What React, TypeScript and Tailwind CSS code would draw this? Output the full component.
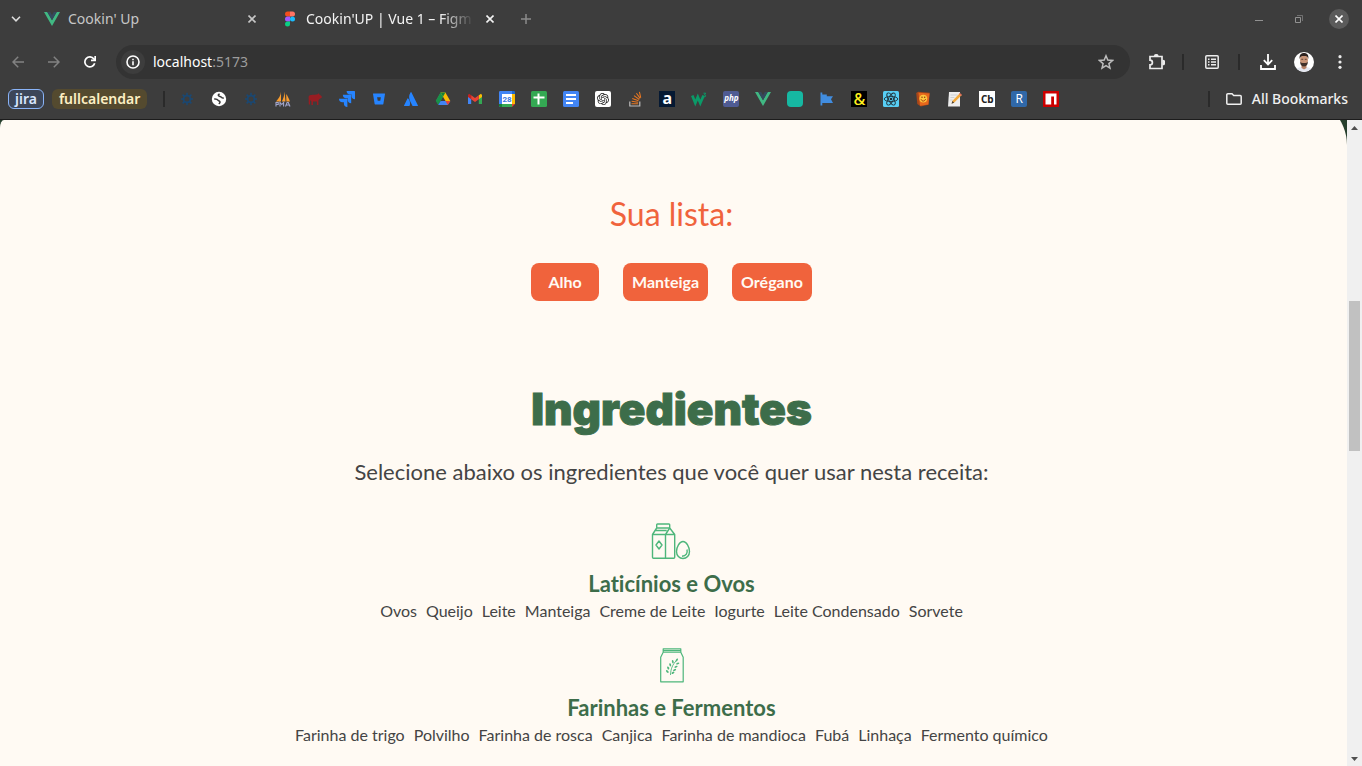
import React from 'react';
import { SiOpenai, SiJira, SiBitbucket, SiAtlassian } from 'react-icons/si';

type IconProps = { className?: string };

const VueIcon = ({ className = 'size-4' }: IconProps) => (
  <svg viewBox="0 0 16 16" className={className}>
    <path d="M0 1h3.3L8 9.2 12.7 1H16L8 15z" fill="#41b883" />
    <path d="M3.3 1h2.9L8 4.2 9.8 1h2.9L8 9.2z" fill="#34495e" />
  </svg>
);

const FigmaIcon = () => (
  <svg viewBox="0 0 16 16" className="size-4">
    <path d="M5.500.5H8v5H5.500a2.500 2.500 0 0 1 0-5z" fill="#f24e1e" />
    <path d="M8 .5h2.500a2.500 2.500 0 0 1 0 5H8z" fill="#ff7262" />
    <path d="M5.500 5.500H8v5H5.500a2.500 2.500 0 0 1 0-5z" fill="#a259ff" />
    <circle cx="10.500" cy="8" r="2.500" fill="#1abcfe" />
    <path d="M5.500 10.500H8V13a2.500 2.500 0 1 1-2.500-2.500z" fill="#0acf83" />
  </svg>
);

const CloseIcon = ({ className = 'size-2' }: IconProps) => (
  <svg viewBox="0 0 8 8" className={className} fill="none" stroke="currentColor" strokeWidth="1.6">
    <path d="M.5.5l7 7M7.500.5l-7 7" />
  </svg>
);

const BurstIcon = () => (
  <svg viewBox="0 0 16 16" className="size-4" fill="none" stroke="#1b4872">
    <circle cx="8" cy="8" r="3.400" strokeWidth="1.800" />
    <path d="M8 1.800v3M8 11.200v3M2 8h3M11 8h3M3.600 3.600l2 2M10.400 10.400l2 2M12.400 3.600l-2 2M5.600 10.400l-2 2" strokeWidth="1.500" />
  </svg>
);

const GlobeIcon = () => (
  <svg viewBox="0 0 16 16" className="size-4">
    <circle cx="8" cy="8" r="7.200" fill="#fff" />
    <path d="M3.200 8c2-.2 3.200.2 3.900 1.200.8 1 2 .7 1.900 1.900-.1.900-.8 1.200-.9 2.100M8.600 2.800c-1 .6-1.800 1.200-1 2 .8.800 2.100.5 2.800 1.400.6.900 1.600 1 2.400.8" fill="none" stroke="#3c3c3c" strokeWidth="1.500" />
  </svg>
);

const SailIcon = () => (
  <svg viewBox="0 0 16 16" className="size-4">
    <path d="M6 .8C5.800 4 4 7.500 1 10.500h5zM9.500.5c-.2 4-1 7-2.700 10h3.700zM11.200 3c1.500 2 2.600 4.500 3.800 7.500h-3.600z" fill="#f89c2e" />
    <path d="M1 15.500v-4h2.200v2H1M5 15.500v-4l1.800 2 1.800-2v4M10.500 15.500l1.600-4h1.200l1.700 4M11 14h3.200" fill="none" stroke="#a3a6cc" strokeWidth="1.100" />
  </svg>
);

const PigIcon = () => (
  <svg viewBox="0 0 16 16" className="size-4">
    <path d="M1.600 5.600C3 3.400 5.500 4 8 3.800l2.600-.5 1-1 .8 1.300 2.300 1.600v1.500l-1.800 1-1.500 1.600V14h-1.500v-3.600H6V14H4.400v-3.500L3 9v4.500H1.800z" fill="#981d22" />
  </svg>
);

const DriveIcon = () => (
  <svg viewBox="0 0 16 16" className="size-4">
    <path d="M5.600 1.500h4.800L5.500 10H.8z" fill="#34a853" />
    <path d="M5.600 1.500L8 5.700 3.200 14 .8 10z" fill="#18904a" />
    <path d="M10.400 1.500L15.300 10h-4.800L5.600 1.500z" fill="#fbbc04" />
    <path d="M5.600 1.500h4.800L8 5.700z" fill="#188038" />
    <path d="M5.600 10h9.700l-2.500 4H3.200z" fill="#4285f4" />
    <path d="M10.500 10h4.800l-2.500 4z" fill="#ea4335" />
  </svg>
);

const GmailIcon = () => (
  <svg viewBox="0 0 16 16" className="size-4">
    <path d="M1 4v9h3.200V7z" fill="#4285f4" />
    <path d="M15 4v9h-3.200V7z" fill="#34a853" />
    <path d="M11.800 4.200L14 2.700l1 1.300v2l-3.200 2.300z" fill="#fbbc04" />
    <path d="M4.200 4.200L2 2.700 1 4v2l3.200 2.300z" fill="#c5221f" />
    <path d="M4.200 4.200L8 7l3.800-2.800v4.100L8 11.100 4.200 8.300z" fill="#ea4335" />
  </svg>
);

const CalendarIcon = () => (
  <svg viewBox="0 0 16 16" className="size-4">
    <path d="M0 1.200A1.200 1.200 0 0 1 1.200 0H13v3H3v13H1.200A1.200 1.200 0 0 1 0 14.800z" fill="#4285f4" />
    <path d="M13 0h1.800A1.200 1.200 0 0 1 16 1.200V3h-3z" fill="#1967d2" />
    <path d="M13 3h3v10h-3z" fill="#fbbc04" />
    <path d="M3 13h10v3H3z" fill="#34a853" />
    <path d="M0 13h3v3H1.200A1.200 1.200 0 0 1 0 14.800z" fill="#188038" />
    <path d="M13 13h3l-3 3z" fill="#ea4335" />
    <path d="M3 3h10v10H3z" fill="#fff" />
    <text x="8" y="11" textAnchor="middle" fontSize="8" fontWeight="700" fill="#3b78e0" fontFamily="Roboto, sans-serif">28</text>
  </svg>
);

const SheetsIcon = () => (
  <svg viewBox="0 0 16 16" className="size-4">
    <rect width="16" height="16" rx="1.500" fill="#34a853" />
    <path d="M2.500 6.500h11M7.500 2.500v11" stroke="#fff" strokeWidth="2" />
  </svg>
);

const DocsIcon = () => (
  <svg viewBox="0 0 16 16" className="size-4">
    <rect width="16" height="16" rx="1.500" fill="#4285f4" />
    <path d="M3 4h10M3 8h10M3 12h7" stroke="#fff" strokeWidth="2" />
  </svg>
);

const OpenAiTile = () => (
  <span className="flex size-4 items-center justify-center rounded-xs bg-white text-[#222]">
    <SiOpenai className="size-3" />
  </span>
);

const StackIcon = () => (
  <svg viewBox="0 0 16 16" className="size-4" fill="none">
    <path d="M2.800 10.500v4.500h10v-4.500" stroke="#bcbbbb" strokeWidth="1.200" />
    <path d="M4.500 12.800h6.600M4.600 10.300l6.500 1M5.300 7.500l6.200 2.300M7 4.600l5.300 3.900M9.400 2.200l3.800 5.200M12.400.8l1.300 5.800" stroke="#e87722" strokeWidth="1.100" />
  </svg>
);

const W3Icon = () => (
  <svg viewBox="0 0 16 16" className="size-4" fill="none" stroke="#0b9a68">
    <path d="M1.300 4.500l3 7.500 2.500-6 2.500 6 3.300-7.500" strokeWidth="2.700" />
    <path d="M12.500 2.200h2.200L13.500 3.900c1.900.1 1.600 2.400-.6 1.800" strokeWidth="1" />
  </svg>
);

const FlagIcon = () => (
  <svg viewBox="0 0 16 16" className="size-4" fill="#418de0">
    <path d="M1.500 1.500h1.800v13H1.500zM3.300 3.500h4.500v1.800h6.200l-2 3 2 3.700H3.300z" />
  </svg>
);

const ReactTile = () => (
  <svg viewBox="0 0 16 16" className="size-4">
    <rect width="16" height="16" rx="1.500" fill="#58cff5" />
    <g fill="none" stroke="#20333c" strokeWidth=".9">
      <ellipse cx="8" cy="8" rx="6.800" ry="2.600" />
      <ellipse cx="8" cy="8" rx="6.800" ry="2.600" transform="rotate(60 8 8)" />
      <ellipse cx="8" cy="8" rx="6.800" ry="2.600" transform="rotate(120 8 8)" />
    </g>
    <circle cx="8" cy="8" r="1.300" fill="#20333c" />
  </svg>
);

const SmileBookIcon = () => (
  <svg viewBox="0 0 16 16" className="size-4">
    <path d="M1.200 2l2-1.300 11.600 1-1.200 12-7.800 1.800-3.500-2.600z" fill="#a94719" />
    <path d="M3.500 1.800l11 .6-1.200 11-8.300 1.400z" fill="#e6671d" />
    <circle cx="8.300" cy="7.600" r="3.900" fill="#ffc53d" />
    <path d="M6 8.200c1 2.600 3.800 2.400 4.600-.2" fill="none" stroke="#a03c10" />
    <circle cx="7" cy="6.300" r=".7" fill="#803010" />
    <circle cx="9.700" cy="6.200" r=".7" fill="#803010" />
  </svg>
);

const NoteIcon = () => (
  <svg viewBox="0 0 16 16" className="size-4">
    <path d="M2 1h11v14.500H1z" fill="#ededed" />
    <path d="M3.500 4h7M3.400 6.500h4M3.200 9h2.500" stroke="#c5c8cc" strokeWidth=".8" />
    <path d="M5.500 9.800l7.300-7.600 2 1.800-7.500 7.600-2.600 1z" fill="#f3a93a" />
    <path d="M12 3l.9-1 2 1.900-.9 1z" fill="#de6a62" />
    <path d="M4.500 12.800l.9-2.800 1.800 1.700z" fill="#4a4033" />
  </svg>
);

const NpmIcon = () => (
  <svg viewBox="0 0 16 16" className="size-4">
    <path d="M0 0h16v16H0z" fill="#cb0000" />
    <path d="M2.500 2.500h11v11H11V5.500H8.200v8H2.500z" fill="#fff" />
  </svg>
);

const bookmarks: { name: string; icon: React.ReactNode }[] = [
  { name: 'Burst', icon: <BurstIcon /> },
  { name: 'Globe', icon: <GlobeIcon /> },
  { name: 'Burst docs', icon: <BurstIcon /> },
  { name: 'phpMyAdmin', icon: <SailIcon /> },
  { name: 'Pig', icon: <PigIcon /> },
  { name: 'Jira', icon: <SiJira className="size-4 text-[#2684ff]" /> },
  { name: 'Bitbucket', icon: <SiBitbucket className="size-3 text-[#2684ff]" /> },
  { name: 'Atlassian', icon: <SiAtlassian className="size-3.5 text-[#2684ff]" /> },
  { name: 'Drive', icon: <DriveIcon /> },
  { name: 'Gmail', icon: <GmailIcon /> },
  { name: 'Calendar', icon: <CalendarIcon /> },
  { name: 'Sheets', icon: <SheetsIcon /> },
  { name: 'Docs', icon: <DocsIcon /> },
  { name: 'ChatGPT', icon: <OpenAiTile /> },
  { name: 'Stack Overflow', icon: <StackIcon /> },
  {
    name: 'Alura',
    icon: <span className="flex size-4 items-center justify-center bg-[#051933] pb-0.5 text-base leading-4 font-bold text-white">a</span>,
  },
  { name: 'W3Schools', icon: <W3Icon /> },
  {
    name: 'PHP',
    icon: <span className="flex size-4 items-center justify-center rounded-xs bg-[#4f5b93] pb-0.5 text-[8px] leading-4 font-bold text-white italic">php</span>,
  },
  { name: 'Vue', icon: <VueIcon /> },
  { name: 'Teal', icon: <span className="block size-4 rounded-sm bg-[#16b8a2]" /> },
  { name: 'Flag', icon: <FlagIcon /> },
  {
    name: 'Ampersand',
    icon: <span className="flex size-4 items-center justify-center bg-black text-base leading-4 font-medium text-[#fff01f]">&amp;</span>,
  },
  { name: 'React', icon: <ReactTile /> },
  { name: 'Smile book', icon: <SmileBookIcon /> },
  { name: 'Notes', icon: <NoteIcon /> },
  {
    name: 'Codebeautify',
    icon: <span className="flex size-4 items-center justify-center bg-white text-[10px] leading-4 font-bold text-[#222]">Cb</span>,
  },
  {
    name: 'R',
    icon: <span className="flex size-4 items-center justify-center rounded-xs bg-[#3068a8] text-xs leading-4 text-white">R</span>,
  },
  { name: 'npm', icon: <NpmIcon /> },
];

const TabStrip = () => (
  <div className="flex h-[38px] items-center">
    <button aria-label="Search tabs" className="flex w-8 justify-center text-[#dcdcdc]">
      <svg viewBox="0 0 10 6" className="h-1.5 w-2.5" fill="none" stroke="currentColor" strokeWidth="1.600">
        <path d="M1 .8l4 4 4-4" />
      </svg>
    </button>
    <div className="flex w-[238px] items-center gap-2 pr-2.5 pl-3 text-[#c7c7c7]">
      <VueIcon />
      <span className="grow text-sm">Cookin' Up</span>
      <button aria-label="Close tab" className="flex w-4 justify-center">
        <CloseIcon />
      </button>
    </div>
    <div className="flex w-[238px] items-center gap-2 pr-2.5 pl-3 text-[#f3f3f3]">
      <FigmaIcon />
      <span className="min-w-0 grow mask-r-from-80% text-sm whitespace-nowrap">Cookin'UP | Vue 1 – Figm</span>
      <button aria-label="Close tab" className="flex w-4 shrink-0 justify-center">
        <CloseIcon />
      </button>
    </div>
    <button aria-label="New tab" className="flex w-9 justify-center text-[#8b8b8b]">
      <svg viewBox="0 0 10 10" className="size-2.5" stroke="currentColor" strokeWidth="1.500">
        <path d="M5 0v10M0 5h10" />
      </svg>
    </button>
    <div className="ml-auto flex items-center pr-[3px] text-[#929292]">
      <button aria-label="Minimize" className="flex w-10 justify-center pt-1">
        <svg viewBox="0 0 8 2" className="h-0.5 w-2" fill="currentColor">
          <path d="M0 0h8v1H0z" />
        </svg>
      </button>
      <button aria-label="Restore" className="flex w-10 justify-center">
        <svg viewBox="0 0 8 8" className="size-2" fill="none" stroke="currentColor">
          <path d="M.5 2.500h5v5h-5z" />
          <path d="M2 .5h5.500V6" opacity=".6" />
        </svg>
      </button>
      <button aria-label="Close window" className="flex w-10 justify-center text-white">
        <span className="flex size-5 items-center justify-center rounded-full bg-[#5b5b5b]">
          <CloseIcon />
        </span>
      </button>
    </div>
  </div>
);

const Toolbar = () => (
  <div className="mt-[7px] flex h-[34px] items-center pr-1">
    <button aria-label="Back" className="flex w-9 justify-center text-[#828282]">
      <svg viewBox="0 0 12 12" className="size-3" fill="none" stroke="currentColor" strokeWidth="1.500">
        <path d="M12 6H1M6.200.8L1 6l5.200 5.200" />
      </svg>
    </button>
    <button aria-label="Forward" className="flex w-9 justify-center text-[#828282]">
      <svg viewBox="0 0 12 12" className="size-3" fill="none" stroke="currentColor" strokeWidth="1.500">
        <path d="M0 6h11M5.800.8L11 6l-5.200 5.200" />
      </svg>
    </button>
    <button aria-label="Reload" className="flex w-9 justify-center text-white">
      <svg viewBox="0 0 12 12" className="size-3" fill="none" stroke="currentColor" strokeWidth="1.700">
        <path d="M10.700 7.300A5 5 0 1 1 9.900 2.900L11 4" />
        <path d="M11.200 0v4.300H7" />
      </svg>
    </button>
    <div className="ml-2 flex h-full min-w-0 grow items-center rounded-full bg-[#333] pl-[5px]">
      <button aria-label="Site information" className="flex size-6 items-center justify-center rounded-full bg-[#3d3d3d] text-white">
        <svg viewBox="0 0 14 14" className="size-3.5" fill="none" stroke="currentColor" strokeWidth="1.600">
          <circle cx="7" cy="7" r="6" />
          <path d="M7 6.300v4M7 3.700v1.500" />
        </svg>
      </button>
      <div className="ml-2 text-sm text-[#9d9d9d]">
        <span className="text-white">localhost</span>:5173
      </div>
      <button aria-label="Bookmark this page" className="ml-auto flex w-12 justify-center text-[#bdbdbd]">
        <svg viewBox="0 0 16 16" className="size-4" fill="none" stroke="currentColor" strokeWidth="1.500">
          <path d="M8 1.800l1.800 4.300 4.700.4-3.600 3.100 1.100 4.500L8 11.700l-4 2.400 1.100-4.500-3.600-3.100 4.700-.4z" />
        </svg>
      </button>
    </div>
    <button aria-label="Extensions" className="flex w-[52px] justify-center pl-0.5 text-[#ededed]">
      <svg viewBox="0 0 16 16" className="size-4" fill="none" stroke="currentColor" strokeWidth="1.700">
        <path d="M1 2.500h12v12H1v-3.600a2.400 2.400 0 0 0 0-4.800z" />
        <path d="M5.500 2a2 2 0 0 1 3.500 0M13.500 6.500a2 2 0 0 1 0 4" fill="currentColor" />
      </svg>
    </button>
    <span className="h-4 w-0.5 bg-[#2a2a2a]" />
    <button aria-label="Reading list" className="flex w-[54px] justify-center pl-0.5 text-[#ededed]">
      <svg viewBox="0 0 14 14" className="size-3.5" fill="none" stroke="currentColor" strokeWidth="1.500">
        <rect x=".8" y=".8" width="12.400" height="12.400" rx="1" />
        <path d="M3 4.200h1.500M6 4.200h5M3 7h1.500M6 7h5M3 9.800h1.500M6 9.800h5" />
      </svg>
    </button>
    <span className="h-4 w-0.5 bg-[#2a2a2a]" />
    <button aria-label="Downloads" className="ml-2.5 flex w-9 justify-center text-white">
      <svg viewBox="0 0 16 16" className="size-4" fill="none" stroke="currentColor" strokeWidth="1.800">
        <path d="M8 0v10M3.800 6.200L8 10.400l4.200-4.200M1 11v4h14v-4" />
      </svg>
    </button>
    <button aria-label="Profile" className="flex w-9 justify-center">
      <svg viewBox="0 0 20 20" className="size-5 rounded-full">
        <path d="M0 0h20v20H0z" fill="#fff" />
        <path d="M1 20c1-4 4-5 9-5s8 1 9 5z" fill="#e4e7f0" />
        <path d="M7.500 11h5v5L10 17.500 7.500 16z" fill="#b98468" />
        <ellipse cx="10" cy="8" rx="4" ry="5.500" fill="#c99578" />
        <path d="M5.700 7C5 3 7 1 10 1s5 2 4.300 6c-.6-2.500-1.500-3-4.300-3S6.300 4.500 5.700 7z" fill="#2d2320" />
        <path d="M6 9.500c.3 3.700 1.800 4.900 4 4.900s3.700-1.200 4-4.900c-.8 1.500-2 1.600-4 1.600s-3.200-.1-4-1.600z" fill="#40302a" />
        <path d="M7.300 7.300h1.900M10.800 7.300h1.900" stroke="#40302a" strokeWidth=".8" />
      </svg>
    </button>
    <button aria-label="Menu" className="flex w-9 justify-center text-[#ededed]">
      <svg viewBox="0 0 4 14" className="h-3.5 w-1" fill="currentColor">
        <circle cx="2" cy="1.700" r="1.600" />
        <circle cx="2" cy="7" r="1.600" />
        <circle cx="2" cy="12.300" r="1.600" />
      </svg>
    </button>
  </div>
);

const BookmarksBar = () => (
  <nav aria-label="Bookmarks" className="flex h-10 items-center pr-3.5 pl-2 text-sm">
    <button className="h-5 rounded-md border border-[#8ab4f8] bg-[#3c4659] px-1.5 leading-4 font-semibold text-[#d8e6ff]">jira</button>
    <button className="ml-2 h-5 rounded-md bg-[#544a2f] px-[7px] leading-5 font-semibold text-[#fdf0c4]">fullcalendar</button>
    <span className="ml-4 h-4 w-0.5 bg-[#2a2a2a]" />
    <div className="ml-3.5 flex gap-4">
      {bookmarks.map((b) => (
        <a key={b.name} href="#" aria-label={b.name} className="flex size-4 items-center justify-center">
          {b.icon}
        </a>
      ))}
    </div>
    <span className="ml-auto h-4 w-0.5 bg-[#2a2a2a]" />
    <button className="ml-4 flex items-center gap-2.5 font-medium text-[#f0f0f0]">
      <svg viewBox="0 0 16 12" className="h-3 w-4" fill="none" stroke="currentColor" strokeWidth="1.500">
        <path d="M.8 10.200V1.800a1 1 0 0 1 1-1H6l1.700 1.700h6.500a1 1 0 0 1 1 1v6.700a1 1 0 0 1-1 1H1.800a1 1 0 0 1-1-1z" />
      </svg>
      All Bookmarks
    </button>
  </nav>
);

const MilkEggIcon = () => (
  <svg viewBox="0 0 40 40" className="size-10" fill="none" stroke="#4eb67b" strokeWidth="1.400" strokeLinejoin="round">
    <rect x="5.700" y="3" width="13" height="4" rx=".8" />
    <path d="M5.700 7L1.500 13.500v22.800a1 1 0 0 0 1 1h20.200a1 1 0 0 0 1-1V13.500L18.700 7M1.500 13.500h22.200M14.500 37.300V13.500L18.700 7M4.500 9.500h11.200" />
    <path d="M8 20l3 4-3 4-3-4z" />
    <path d="M32 20.500c3.500 0 6.500 5.500 6.500 10 0 4-2.800 7-6.500 7s-6.500-3-6.500-7c0-4.500 3-10 6.500-10z" />
    <path d="M36 28.500c.8 3.500-.8 6.500-5 6.800" />
  </svg>
);

const FlourIcon = () => (
  <svg viewBox="-1 -1 40 40" className="size-10" fill="none" stroke="#4eb67b" strokeWidth="1.200" strokeLinejoin="round">
    <path d="M11.200 2.800h17.600v3.400H11.200zM11.200 6.200l-2.500 5v24.600h22.500V11.200l-2.400-5M11 4.500h18" />
    <path d="M18.500 29c.2-6 2-10.500 6-14.500" strokeWidth=".9" />
    <g fill="#4eb67b" stroke="none">
      <ellipse cx="24.800" cy="14" rx=".9" ry="1.700" transform="rotate(35 24.800 14)" />
      <ellipse cx="20.800" cy="15.700" rx=".9" ry="1.700" transform="rotate(-10 20.800 15.700)" />
      <ellipse cx="18.200" cy="18.800" rx=".9" ry="1.700" transform="rotate(-15 18.200 18.800)" />
      <ellipse cx="16.200" cy="22" rx=".9" ry="1.700" transform="rotate(-25 16.200 22)" />
      <ellipse cx="15.300" cy="25.500" rx=".9" ry="1.700" transform="rotate(-45 15.300 25.500)" />
      <ellipse cx="25.700" cy="17.500" rx=".9" ry="1.700" transform="rotate(70 25.700 17.500)" />
      <ellipse cx="24" cy="20.800" rx=".9" ry="1.700" transform="rotate(65 24 20.800)" />
      <ellipse cx="22.600" cy="24" rx=".9" ry="1.700" transform="rotate(60 22.600 24)" />
      <ellipse cx="21" cy="26.800" rx=".9" ry="1.600" transform="rotate(55 21 26.800)" />
    </g>
  </svg>
);

const selected = ['Alho', 'Manteiga', 'Orégano'];

const categories = [
  {
    name: 'Laticínios e Ovos',
    icon: <MilkEggIcon />,
    items: ['Ovos', 'Queijo', 'Leite', 'Manteiga', 'Creme de Leite', 'Iogurte', 'Leite Condensado', 'Sorvete'],
  },
  {
    name: 'Farinhas e Fermentos',
    icon: <FlourIcon />,
    items: ['Farinha de trigo', 'Polvilho', 'Farinha de rosca', 'Canjica', 'Farinha de mandioca', 'Fubá', 'Linhaça', 'Fermento químico'],
  },
];

const Scrollbar = () => (
  <div aria-hidden="true" className="flex w-[15px] shrink-0 flex-col items-center bg-[#f0f0f0] pr-px">
    <svg viewBox="0 0 7 15" className="h-[15px] w-[7px] shrink-0" fill="#505050">
      <path d="M0 10l3.500-4L7 10z" />
    </svg>
    <div className="grow-[166]" />
    <div className="w-[11px] grow-[150] bg-[#c1c1c1]" />
    <div className="grow-[300]" />
    <svg viewBox="0 0 7 15" className="h-[15px] w-[7px] shrink-0" fill="#505050">
      <path d="M0 6l3.500 4L7 6z" />
    </svg>
  </div>
);

export default function App() {
  return (
    <div className="flex min-h-screen flex-col">
      <header className="border-b border-[#1c1c1c] bg-[#3d3d3d] font-['Noto_Sans',sans-serif]">
        <TabStrip />
        <Toolbar />
        <BookmarksBar />
      </header>
      <div className="flex grow">
        <main className="flex min-w-0 grow bg-[#263f2d] font-['Lato',sans-serif] [font-variant-ligatures:none]">
          <div className="flex grow overflow-hidden rounded-tl-[4px_8px]">
            <div className="-mt-[23px] flex grow flex-col items-center rounded-tr-[48px] bg-[#fffaf3] pt-24 pr-1 text-[#444]">
              <section className="flex flex-col items-center">
                <h2 className="text-[32px] leading-[42px] font-normal text-[#f0633c]">Sua lista:</h2>
                <ul className="mt-7 flex gap-6">
                  {selected.map((item) => (
                    <li key={item} className="min-w-[68px] rounded-lg bg-[#f0633c] px-[9px] text-center text-base leading-[38px] font-bold text-[#fffaf3]">
                      {item}
                    </li>
                  ))}
                </ul>
              </section>
              <section className="mt-[78px] flex flex-col items-center">
                <h1 className="font-['Inter',sans-serif] text-[44px] leading-[60px] font-black text-[#3d6d4a] [-webkit-text-stroke:1px_#3d6d4a]">Ingredientes</h1>
                <p className="mt-[17px] text-[22px] leading-8">Selecione abaixo os ingredientes que você quer usar nesta receita:</p>
                <div className="mt-[33px] flex flex-col gap-[22px]">
                  {categories.map((c) => (
                    <article key={c.name} className="flex flex-col items-center">
                      {c.icon}
                      <h3 className="mt-2 text-[22px] leading-[30px] font-bold text-[#3d6d4a]">{c.name}</h3>
                      <ul className="flex gap-[9px] text-base leading-6">
                        {c.items.map((item) => (
                          <li key={item}>{item}</li>
                        ))}
                      </ul>
                    </article>
                  ))}
                </div>
              </section>
            </div>
          </div>
        </main>
        <Scrollbar />
      </div>
    </div>
  );
}
